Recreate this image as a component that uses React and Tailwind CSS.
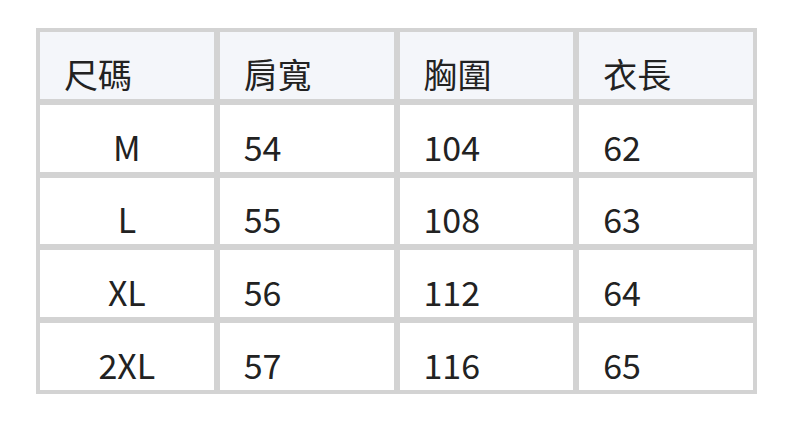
export default function App() {
  const headers = ["尺碼", "肩寬", "胸圍", "衣長"];
  const rows = [
    ["M", "54", "104", "62"],
    ["L", "55", "108", "63"],
    ["XL", "56", "112", "64"],
    ["2XL", "57", "116", "65"],
  ];
  return (
    <div
      className="w-[792px] h-[422px] bg-white pt-[28px] pl-[36px]"
      style={{ fontFamily: '"Noto Sans CJK TC", "Noto Sans", sans-serif' }}
    >
      <div className="w-[721px] h-[366px] bg-[#d3d3d3] p-[4px] grid grid-cols-4 grid-rows-5 gap-[6px] text-[34px] leading-none text-[#222222]">
        {headers.map((h) => (
          <div key={h} className="bg-[#f4f6fa] flex items-end pl-[24px] pb-[8px]">
            {h}
          </div>
        ))}
        {rows.map((r) =>
          r.map((c, i) => (
            <div
              key={r[0] + i}
              className={
                "bg-white flex items-end pb-[8px] " +
                (i === 0 ? "justify-center" : "pl-[24px]")
              }
            >
              {c}
            </div>
          ))
        )}
      </div>
    </div>
  );
}
